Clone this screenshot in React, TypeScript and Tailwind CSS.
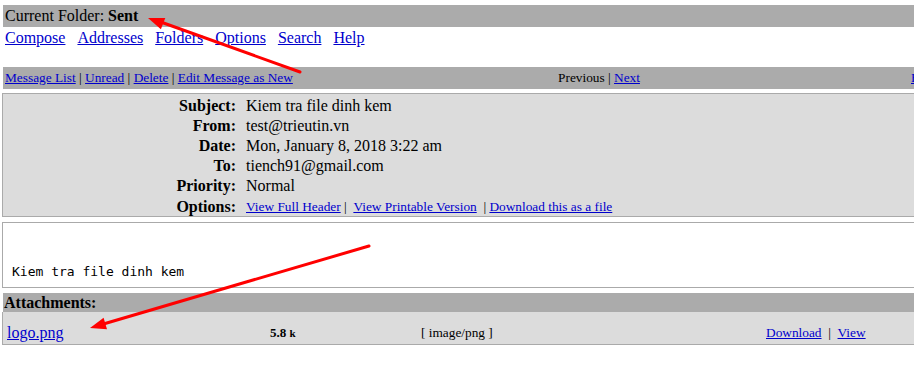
import React from "react";

const serif = { fontFamily: '"Liberation Serif", "Times New Roman", serif' };
const mono = { fontFamily: '"DejaVu Sans Mono", monospace' };

function L({ children, className = "" }: { children: React.ReactNode; className?: string }) {
  return (
    <a href="#" className={"text-[#0000cc] underline " + className}>
      {children}
    </a>
  );
}

export default function App() {
  const rows: [string, React.ReactNode][] = [
    ["Subject:", "Kiem tra file dinh kem"],
    ["From:", "test@trieutin.vn"],
    ["Date:", "Mon, January 8, 2018 3:22 am"],
    ["To:", "tiench91@gmail.com"],
    ["Priority:", "Normal"],
    [
      "Options:",
      <span className="text-[13.33px]">
        <L>View Full Header</L>
        {"\u00a0|\u00a0\u00a0"}
        <L>View Printable Version</L>
        {"\u00a0\u00a0|\u00a0"}
        <L>Download this as a file</L>
      </span>,
    ],
  ];

  return (
    <div className="relative w-full h-[380px] overflow-hidden bg-white text-black" style={serif}>
      <div className="w-[1200px] pt-[5px] pl-[2px]">
        {/* Current folder bar */}
        <div className="ml-px h-[22px] bg-[#ababab] pl-[2px] text-[16px] leading-[22px]">
          Current Folder: <b>Sent</b>
        </div>
        {/* Nav links */}
        <div className="ml-px h-[22px] pl-[2px] flex gap-[12px] text-[16px] leading-[22px]">
          <L>Compose</L>
          <L>Addresses</L>
          <L>Folders</L>
          <L>Options</L>
          <L>Search</L>
          <L>Help</L>
        </div>
        {/* Message bar */}
        <div className="ml-px mt-[18px] h-[22px] bg-[#ababab] flex items-center text-[13.33px] leading-[22px]">
          <div className="w-[455px] pl-[2px] whitespace-nowrap">
            <L>Message List</L> | <L>Unread</L> | <L>Delete</L> | <L>Edit Message as New</L>
          </div>
          <div className="w-[282px] text-center whitespace-nowrap">
            Previous | <L>Next</L>
          </div>
          <div className="pl-[171px] whitespace-nowrap">
            <L>Forward</L> | <L>Forward as Attachment</L> | <L>Reply</L> | <L>Reply All</L>
          </div>
        </div>
        {/* Header box */}
        <div className="mt-[4px] border border-[#aaaaaa] bg-[#dcdcdc] pt-[2px] pb-0">
          {rows.map(([k, v]) => (
            <div key={k} className="grid grid-cols-[233px_1fr] h-[20px] items-center text-[16px] leading-[20px]">
              <div className="text-right font-bold">{k}</div>
              <div className="pl-[10px] whitespace-nowrap">{v}</div>
            </div>
          ))}
        </div>
        {/* Body */}
        <div className="mt-[5px] h-[66px] border border-[#aaaaaa] bg-white pl-[9px] pt-[40px]">
          <div className="text-[13px] leading-[17px]" style={mono}>
            Kiem tra file dinh kem
          </div>
        </div>
        {/* Attachments */}
        <div className="mt-[5px] ml-px h-[19px] bg-[#ababab] pl-px text-[16px] leading-[20px] font-bold">
          Attachments:
        </div>
        <div className="h-[33px] border-x border-b border-[#aaaaaa] bg-[#dcdcdc] flex items-center pt-[9px]">
          <div className="w-[267px] pl-[4px] text-[16px]">
            <L>logo.png</L>
          </div>
          <div className="w-[151px] text-[13px] font-bold whitespace-nowrap">
            5.8&nbsp;<span className="text-[11px]">k</span>
          </div>
          <div className="w-[345px] text-[13.33px] whitespace-nowrap">[ image/png ]</div>
          <div className="text-[13.33px] whitespace-nowrap">
            <L>Download</L>
            {"\u00a0\u00a0|\u00a0\u00a0"}
            <L>View</L>
          </div>
        </div>
      </div>

      {/* Red annotation arrows */}
      <svg className="absolute left-0 top-0 pointer-events-none" width="914" height="380" viewBox="0 0 914 380">
        <line x1="300" y1="72" x2="158" y2="21" stroke="#ff0000" strokeWidth="3" strokeLinecap="round" />
        <polygon points="148,18 160.9,29.2 165.3,17.9" fill="#ff0000" />
        <line x1="369" y1="246" x2="100" y2="325" stroke="#ff0000" strokeWidth="3" strokeLinecap="round" />
        <polygon points="90,328 107,329.3 103.6,317.8" fill="#ff0000" />
      </svg>
    </div>
  );
}
